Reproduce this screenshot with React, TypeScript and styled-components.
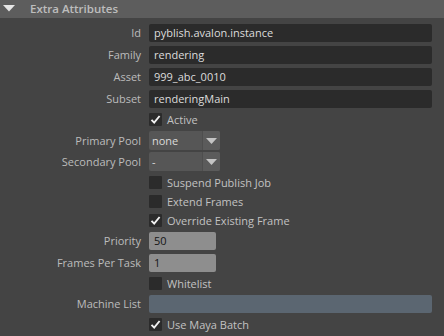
import React from 'react';
import styled, { createGlobalStyle } from 'styled-components';

const GlobalStyle = createGlobalStyle`
  html, body {
    margin: 0;
    padding: 0;
    background: #444444;
  }
  body {
    font-family: "Open Sans", "Noto Sans", sans-serif;
    font-size: 11px;
  }
`;

type FieldTone = 'dark' | 'light' | 'slate';

const App: React.FC = () => {
  return (
    <>
      <GlobalStyle />
      <Panel>
        <SectionHeader>
          <Caret viewBox="0 0 12 7">
            <path d="M0 0 L12 0 L6 6.5 Z" fill="#e6e6e6" />
          </Caret>
          <SectionTitle>Extra Attributes</SectionTitle>
        </SectionHeader>

        <Form>
          <FieldRow>
            <Label>Id</Label>
            <TextField $tone="dark">pyblish.avalon.instance</TextField>
          </FieldRow>
          <FieldRow>
            <Label>Family</Label>
            <TextField $tone="dark">rendering</TextField>
          </FieldRow>
          <FieldRow>
            <Label>Asset</Label>
            <TextField $tone="dark">999_abc_0010</TextField>
          </FieldRow>
          <FieldRow>
            <Label>Subset</Label>
            <TextField $tone="dark">renderingMain</TextField>
          </FieldRow>

          <CheckRow>
            <Label />
            <Check checked label="Active" />
          </CheckRow>

          <DropRow>
            <Label>Primary Pool</Label>
            <Dropdown value="none" />
          </DropRow>
          <DropRow>
            <Label>Secondary Pool</Label>
            <Dropdown value="-" />
          </DropRow>

          <CheckRow $spaceTop>
            <Label />
            <Check label="Suspend Publish Job" />
          </CheckRow>
          <CheckRow>
            <Label />
            <Check label="Extend Frames" />
          </CheckRow>
          <CheckRow>
            <Label />
            <Check checked label="Override Existing Frame" />
          </CheckRow>

          <FieldRow>
            <Label>Priority</Label>
            <TextField $tone="light" $short>50</TextField>
          </FieldRow>
          <FieldRow>
            <Label>Frames Per Task</Label>
            <TextField $tone="light" $short>1</TextField>
          </FieldRow>

          <CheckRow>
            <Label />
            <Check label="Whitelist" />
          </CheckRow>

          <FieldRow>
            <Label>Machine List</Label>
            <TextField $tone="slate" />
          </FieldRow>

          <CheckRow>
            <Label />
            <Check checked label="Use Maya Batch" />
          </CheckRow>
        </Form>
      </Panel>
    </>
  );
};

const Check: React.FC<{ checked?: boolean; label: string }> = ({
  checked,
  label,
}) => (
  <CheckWrap>
    <CheckBox>
      {checked && (
        <svg width="13" height="13" viewBox="0 0 13 13">
          <path
            d="M2.5 6.8 L5.2 9.6 L10.6 3"
            fill="none"
            stroke="#f2f2f2"
            strokeWidth="1.9"
          />
        </svg>
      )}
    </CheckBox>
    <CheckLabel>{label}</CheckLabel>
  </CheckWrap>
);

const Dropdown: React.FC<{ value: string }> = ({ value }) => (
  <DropBox>
    <DropValue>{value}</DropValue>
    <DropArrow>
      <svg width="11" height="6" viewBox="0 0 11 6">
        <path d="M0 0 L11 0 L5.5 6 Z" fill="#c4c4c4" />
      </svg>
    </DropArrow>
  </DropBox>
);

export default App;

const Panel = styled.div`
  width: 444px;
  height: 336px;
  overflow: hidden;
  background: #444444;
  color: #c2c2c2;
`;

const SectionHeader = styled.div`
  height: 18px;
  display: flex;
  align-items: center;
  background: #5d5d5d;
`;

const Caret = styled.svg`
  width: 12px;
  height: 7px;
  margin-left: 3px;
  margin-right: 15px;
  margin-top: -2px;
`;

const SectionTitle = styled.span`
  font-weight: 600;
  font-size: 11.5px;
  color: #bdbdbd;
  margin-top: -1px;
`;

const Form = styled.div`
  display: flex;
  flex-direction: column;
  padding-top: 4px;
  padding-right: 12px;
`;

const Row = styled.div`
  display: grid;
  grid-template-columns: 141px 1fr;
  column-gap: 8px;
`;

const FieldRow = styled(Row)`
  height: 22px;
  align-items: center;
`;

const CheckRow = styled(Row)<{ $spaceTop?: boolean }>`
  height: 19px;
  align-items: center;
  margin-top: ${({ $spaceTop }) => ($spaceTop ? '2px' : '0')};
`;

const DropRow = styled(Row)`
  height: 21px;
  align-items: end;
`;

const Label = styled.div`
  text-align: right;
  white-space: nowrap;
  color: #bcbcbc;
  line-height: 18px;
`;

const toneBg: Record<FieldTone, string> = {
  dark: '#2b2b2b',
  light: '#8e8e8e',
  slate: '#5b6671',
};

const toneText: Record<FieldTone, string> = {
  dark: '#dcdcdc',
  light: '#151515',
  slate: '#dcdcdc',
};

const TextField = styled.div<{ $tone: FieldTone; $short?: boolean }>`
  height: 18px;
  width: ${({ $short }) => ($short ? '67px' : 'auto')};
  box-sizing: border-box;
  padding: 0 5px;
  border-radius: 2px;
  background: ${({ $tone }) => toneBg[$tone]};
  color: ${({ $tone }) => toneText[$tone]};
  line-height: 18px;
  white-space: nowrap;
  overflow: hidden;
`;

const CheckWrap = styled.div`
  display: flex;
  align-items: center;
  gap: 5px;
`;

const CheckBox = styled.div`
  width: 13px;
  height: 13px;
  background: #2b2b2b;
  border-radius: 1px;
  display: flex;
`;

const CheckLabel = styled.span`
  color: #c2c2c2;
  line-height: 16px;
`;

const DropBox = styled.div`
  width: 71px;
  height: 19px;
  display: flex;
  border-radius: 2px;
  overflow: hidden;
  background: #565656;
`;

const DropValue = styled.div`
  width: 50px;
  padding-left: 3px;
  line-height: 19px;
  color: #dadada;
`;

const DropArrow = styled.div`
  flex: 1;
  display: flex;
  align-items: center;
  justify-content: center;
  background: #5b5b5b;
  border-left: 1px solid #4e4e4e;
`;
